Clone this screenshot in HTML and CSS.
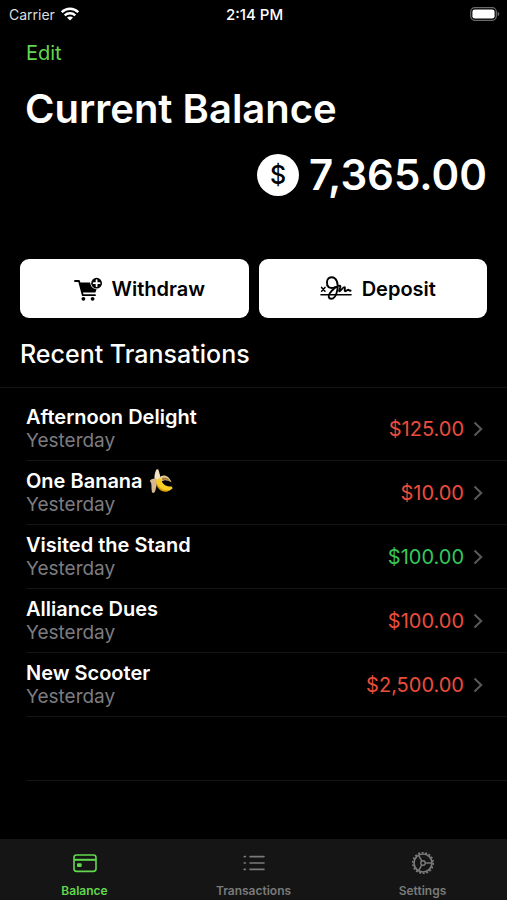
FILE: index.html
```html
<!DOCTYPE html>
<html lang="en">
<head>
    <meta charset="utf-8">
    <meta name="viewport" content="width=device-width, initial-scale=1">
    <title>Current Balance</title>
    <link rel="stylesheet" href="styles.css">
</head>
<body>
    <div class="app">
        <header class="status-bar">
            <div class="carrier">
                <span>Carrier</span>
                <svg class="wifi" viewBox="0 0 18 14" aria-hidden="true">
                    <g fill="none" stroke="#fff" stroke-width="2.4">
                        <path d="M0.8 5.2C5.4 0.6 12.6 0.6 17.2 5.2"/>
                        <path d="M3.7 8.4C6.7 5.6 11.3 5.6 14.3 8.4"/>
                    </g>
                    <path fill="#fff" d="M9 13.6L6 10.6C7.6 9.2 10.4 9.2 12 10.6Z"/>
                </svg>
            </div>
            <time class="clock">2:14 PM</time>
            <svg class="battery" viewBox="0 0 30 14" aria-hidden="true">
                <rect x="0.7" y="0.7" width="25.6" height="12.6" rx="4" fill="none" stroke="#6a6a6a" stroke-width="1.2"/>
                <rect x="2.4" y="2.4" width="22.2" height="9.2" rx="2.4" fill="#fff"/>
                <path d="M27.6 4.8C29.8 5.4 29.8 8.6 27.6 9.2Z" fill="#6a6a6a"/>
            </svg>
        </header>

        <nav class="toolbar">
            <button class="edit" type="button">Edit</button>
        </nav>

        <main>
            <h1>Current Balance</h1>
            <p class="balance">
                <span class="coin">$</span>
                <span>7,365.00</span>
            </p>

            <div class="actions">
                <button class="action" type="button">
                    <svg class="cart" viewBox="0 0 28 26" aria-hidden="true">
                        <path d="M1 5H5L8.8 19.2H21" fill="none" stroke="#000" stroke-width="1.8" stroke-linecap="round" stroke-linejoin="round"/>
                        <path d="M5.4 6.6H16.2C16.4 10.4 19 13 22.6 13.2L21.4 16.4H8.2Z" fill="#000"/>
                        <circle cx="9.4" cy="22.8" r="1.9" fill="#000"/>
                        <circle cx="18.6" cy="22.8" r="1.9" fill="#000"/>
                        <circle cx="22.6" cy="7.2" r="5.4" fill="#000"/>
                        <path d="M22.6 4.2V10.2M19.6 7.2H25.6" stroke="#fff" stroke-width="1.8" stroke-linecap="round"/>
                    </svg>
                    Withdraw
                </button>
                <button class="action" type="button">
                    <svg class="signature" viewBox="0 0 32 26" aria-hidden="true">
                        <g fill="none" stroke="#000" stroke-linecap="round" stroke-linejoin="round">
                            <path stroke-width="1.6" d="M1 18.8H31"/>
                            <path stroke-width="1.5" d="M1.6 11.4L5 15.2M5 11.4L1.6 15.2"/>
                            <path stroke-width="1.9" d="M7.4 9.4C5.8 5 8 1.2 11.6 1.2C16.4 1.2 18.8 7.4 17.2 14.6C16.2 19.4 14 22.8 11.2 22.8C8.4 22.8 8 19.8 9.8 17.2C12 14 16.8 9.6 19.6 9.6C21.8 9.8 18.4 15.2 19.4 15.4C20.6 15.6 23 10.6 24.6 11.2C25.8 11.8 23.8 15 25.2 15.2C26.6 15.4 27.8 13.4 28.6 13.8C29.4 14.4 29.6 15 30.6 14.6"/>
                            <path stroke-width="1.9" d="M7.4 9.4C8.4 12.4 12.4 12.6 15.2 11"/>
                        </g>
                    </svg>
                    Deposit
                </button>
            </div>

            <h2>Recent Transations</h2>

            <ul class="transactions">
                <li>
                    <a href="#" class="transaction">
                        <span class="details">
                            <span class="name">Afternoon Delight</span>
                            <span class="date">Yesterday</span>
                        </span>
                        <span class="amount expense">$125.00</span>
                        <svg class="chevron" viewBox="0 0 10 16" aria-hidden="true"><path d="M1.5 1.5L8.2 8L1.5 14.5"/></svg>
                    </a>
                </li>
                <li>
                    <a href="#" class="transaction">
                        <span class="details">
                            <span class="name">One Banana
                                <svg class="banana" viewBox="0 0 24 26" role="img" aria-label="banana">
                                    <path d="M7.4 1.4L9.2 1.2C10.6 5 12 9.4 10.8 14L6 13.6C4.8 9 5.6 5 7.4 1.4Z" fill="#f4e3c3"/>
                                    <path d="M6.6 10.6C3 10.6 1 12 0.8 13.2C3.2 14.6 2 19 3 24.2C4.2 25.6 5.4 25 6 23.6C7.4 20.4 7.6 15 9.4 12.6Z" fill="#d9b791"/>
                                    <path d="M10 9.6C14.4 5.4 20 7.6 22.6 14.4C19 12 15 11.4 12 14Z" fill="#e8cf97"/>
                                    <path d="M13.2 9.8C16.6 8.6 19.6 10.6 21.4 13.2C18.4 11.8 15.4 11.2 13 12.6Z" fill="#a97c38"/>
                                    <path d="M7.2 12.6C8.2 10.4 10.8 9.2 12 11C13 16.6 17.4 18.6 22.8 18.6L23.6 20.2C19 25.4 8.2 24.8 7.2 12.6Z" fill="#f6cf22"/>
                                    <path d="M7.2 13.4C9.4 20 14.2 23.2 21.4 22C15.6 26 7.4 22.6 7.2 13.4Z" fill="#d99c10"/>
                                </svg>
                            </span>
                            <span class="date">Yesterday</span>
                        </span>
                        <span class="amount expense">$10.00</span>
                        <svg class="chevron" viewBox="0 0 10 16" aria-hidden="true"><path d="M1.5 1.5L8.2 8L1.5 14.5"/></svg>
                    </a>
                </li>
                <li>
                    <a href="#" class="transaction">
                        <span class="details">
                            <span class="name">Visited the Stand</span>
                            <span class="date">Yesterday</span>
                        </span>
                        <span class="amount income">$100.00</span>
                        <svg class="chevron" viewBox="0 0 10 16" aria-hidden="true"><path d="M1.5 1.5L8.2 8L1.5 14.5"/></svg>
                    </a>
                </li>
                <li>
                    <a href="#" class="transaction">
                        <span class="details">
                            <span class="name">Alliance Dues</span>
                            <span class="date">Yesterday</span>
                        </span>
                        <span class="amount expense">$100.00</span>
                        <svg class="chevron" viewBox="0 0 10 16" aria-hidden="true"><path d="M1.5 1.5L8.2 8L1.5 14.5"/></svg>
                    </a>
                </li>
                <li>
                    <a href="#" class="transaction">
                        <span class="details">
                            <span class="name">New Scooter</span>
                            <span class="date">Yesterday</span>
                        </span>
                        <span class="amount expense">$2,500.00</span>
                        <svg class="chevron" viewBox="0 0 10 16" aria-hidden="true"><path d="M1.5 1.5L8.2 8L1.5 14.5"/></svg>
                    </a>
                </li>
                <li></li>
            </ul>
        </main>

        <nav class="tab-bar">
            <a href="#" class="tab active">
                <svg viewBox="0 0 26 26" aria-hidden="true">
                    <rect x="2" y="5" width="22" height="16.4" rx="2.6" fill="none" stroke="currentColor" stroke-width="1.6"/>
                    <path d="M2 9.8H24" stroke="currentColor" stroke-width="2"/>
                    <rect x="5" y="13.2" width="4.6" height="3.8" rx="1" fill="currentColor"/>
                </svg>
                Balance
            </a>
            <a href="#" class="tab">
                <svg viewBox="0 0 26 26" aria-hidden="true">
                    <g stroke="currentColor" stroke-width="1.6" stroke-linecap="round">
                        <path d="M3.2 6.6H4.4M3.2 13H4.4M3.2 19.4H4.4"/>
                        <path d="M9 6.6H23M9 13H23M9 19.4H23"/>
                    </g>
                </svg>
                Transactions
            </a>
            <a href="#" class="tab">
                <svg viewBox="0 0 26 26" aria-hidden="true">
                    <g fill="none" stroke="currentColor">
                        <circle cx="13" cy="13" r="9" stroke-width="1.7"/>
                        <circle cx="13" cy="13" r="10.3" stroke-width="1.6" stroke-dasharray="2 1.6"/>
                        <circle cx="13" cy="13" r="2.2" stroke-width="1.4"/>
                        <path stroke-width="1.5" d="M15.2 13H22M11.9 11.1L8.5 5.2M11.9 14.9L8.5 20.8"/>
                    </g>
                </svg>
                Settings
            </a>
        </nav>
    </div>
</body>
</html>
```

FILE: styles.css
```css
* {
    box-sizing: border-box;
}

body {
    margin: 0;
    background-color: #000;
    color: #fff;
    font-family: Inter, "Liberation Sans", sans-serif;
}

button {
    border: none;
    padding: 0;
    font-family: inherit;
    cursor: pointer;
}

a {
    color: inherit;
    text-decoration: none;
}

.app {
    display: flex;
    flex-direction: column;
    min-height: 100vh;
}

.status-bar {
    display: grid;
    grid-template-columns: 1fr auto 1fr;
    align-items: center;
    height: 28px;
    padding: 0 7px 0 9px;
    font-size: 14px;
}

.carrier {
    display: flex;
    align-items: center;
    gap: 6px;
    color: #ddd;
}

.wifi {
    width: 18px;
    height: 14px;
}

.clock {
    font-size: 15px;
    font-weight: 500;
}

.battery {
    width: 30px;
    height: 14px;
    justify-self: end;
}

.toolbar {
    padding: 12px 26px 0;
}

.edit {
    background: none;
    color: #62d84e;
    font-size: 20px;
    line-height: 26px;
}

main {
    flex: 1;
}

h1 {
    margin: 18px 25px 0;
    font-size: 40px;
    font-weight: 600;
    line-height: 50px;
}

.balance {
    display: flex;
    justify-content: flex-end;
    align-items: center;
    gap: 10px;
    margin: 16px 20px 0;
    font-size: 42px;
    font-weight: 600;
    line-height: 50px;
}

.coin {
    width: 42px;
    height: 42px;
    border-radius: 50%;
    background-color: #fff;
    color: #000;
    font-size: 25px;
    font-weight: 500;
    line-height: 42px;
    text-align: center;
}

.actions {
    display: flex;
    gap: 10px;
    margin: 59px 20px 0;
}

.action {
    flex: 1;
    display: flex;
    justify-content: center;
    align-items: center;
    gap: 10px;
    height: 59px;
    padding-left: 10px;
    border-radius: 9px;
    background-color: #fff;
    color: #000;
    font-size: 20px;
    font-weight: 600;
}

.cart {
    width: 28px;
    height: 26px;
}

.signature {
    width: 32px;
    height: 26px;
}

h2 {
    margin: 0;
    padding: 20px 20px 17px;
    border-bottom: 1px solid #141416;
    font-size: 25px;
    font-weight: 500;
    line-height: 32px;
}

.transactions {
    margin: 9px 0 0;
    padding: 0 0 0 26px;
    list-style: none;
}

.transactions li {
    height: 64px;
    border-bottom: 1px solid #141416;
}

.transaction {
    display: flex;
    align-items: center;
    height: 100%;
    padding-right: 24px;
}

.details {
    flex: 1;
    display: flex;
    flex-direction: column;
    line-height: 24px;
}

.name {
    display: flex;
    align-items: center;
    gap: 6px;
    font-size: 20px;
    font-weight: 600;
}

.banana {
    width: 24px;
    height: 26px;
    margin: -1px 0;
}

.date {
    color: #7c7c80;
    font-size: 19px;
}

.amount {
    font-size: 20px;
}

.expense {
    color: #eb4d3d;
}

.income {
    color: #34c759;
}

.chevron {
    width: 10px;
    height: 16px;
    margin-left: 9px;
    fill: none;
    stroke: #5a5a5e;
    stroke-width: 2;
}

.tab-bar {
    display: flex;
    height: 61px;
    background-color: #151515;
    color: #7a7a7a;
}

.tab {
    flex: 1;
    display: flex;
    flex-direction: column;
    align-items: center;
    gap: 7px;
    padding-top: 11px;
    font-size: 12px;
    font-weight: 600;
    line-height: 16px;
}

.tab svg {
    width: 26px;
    height: 26px;
}

.tab.active {
    color: #62d84e;
}
```
